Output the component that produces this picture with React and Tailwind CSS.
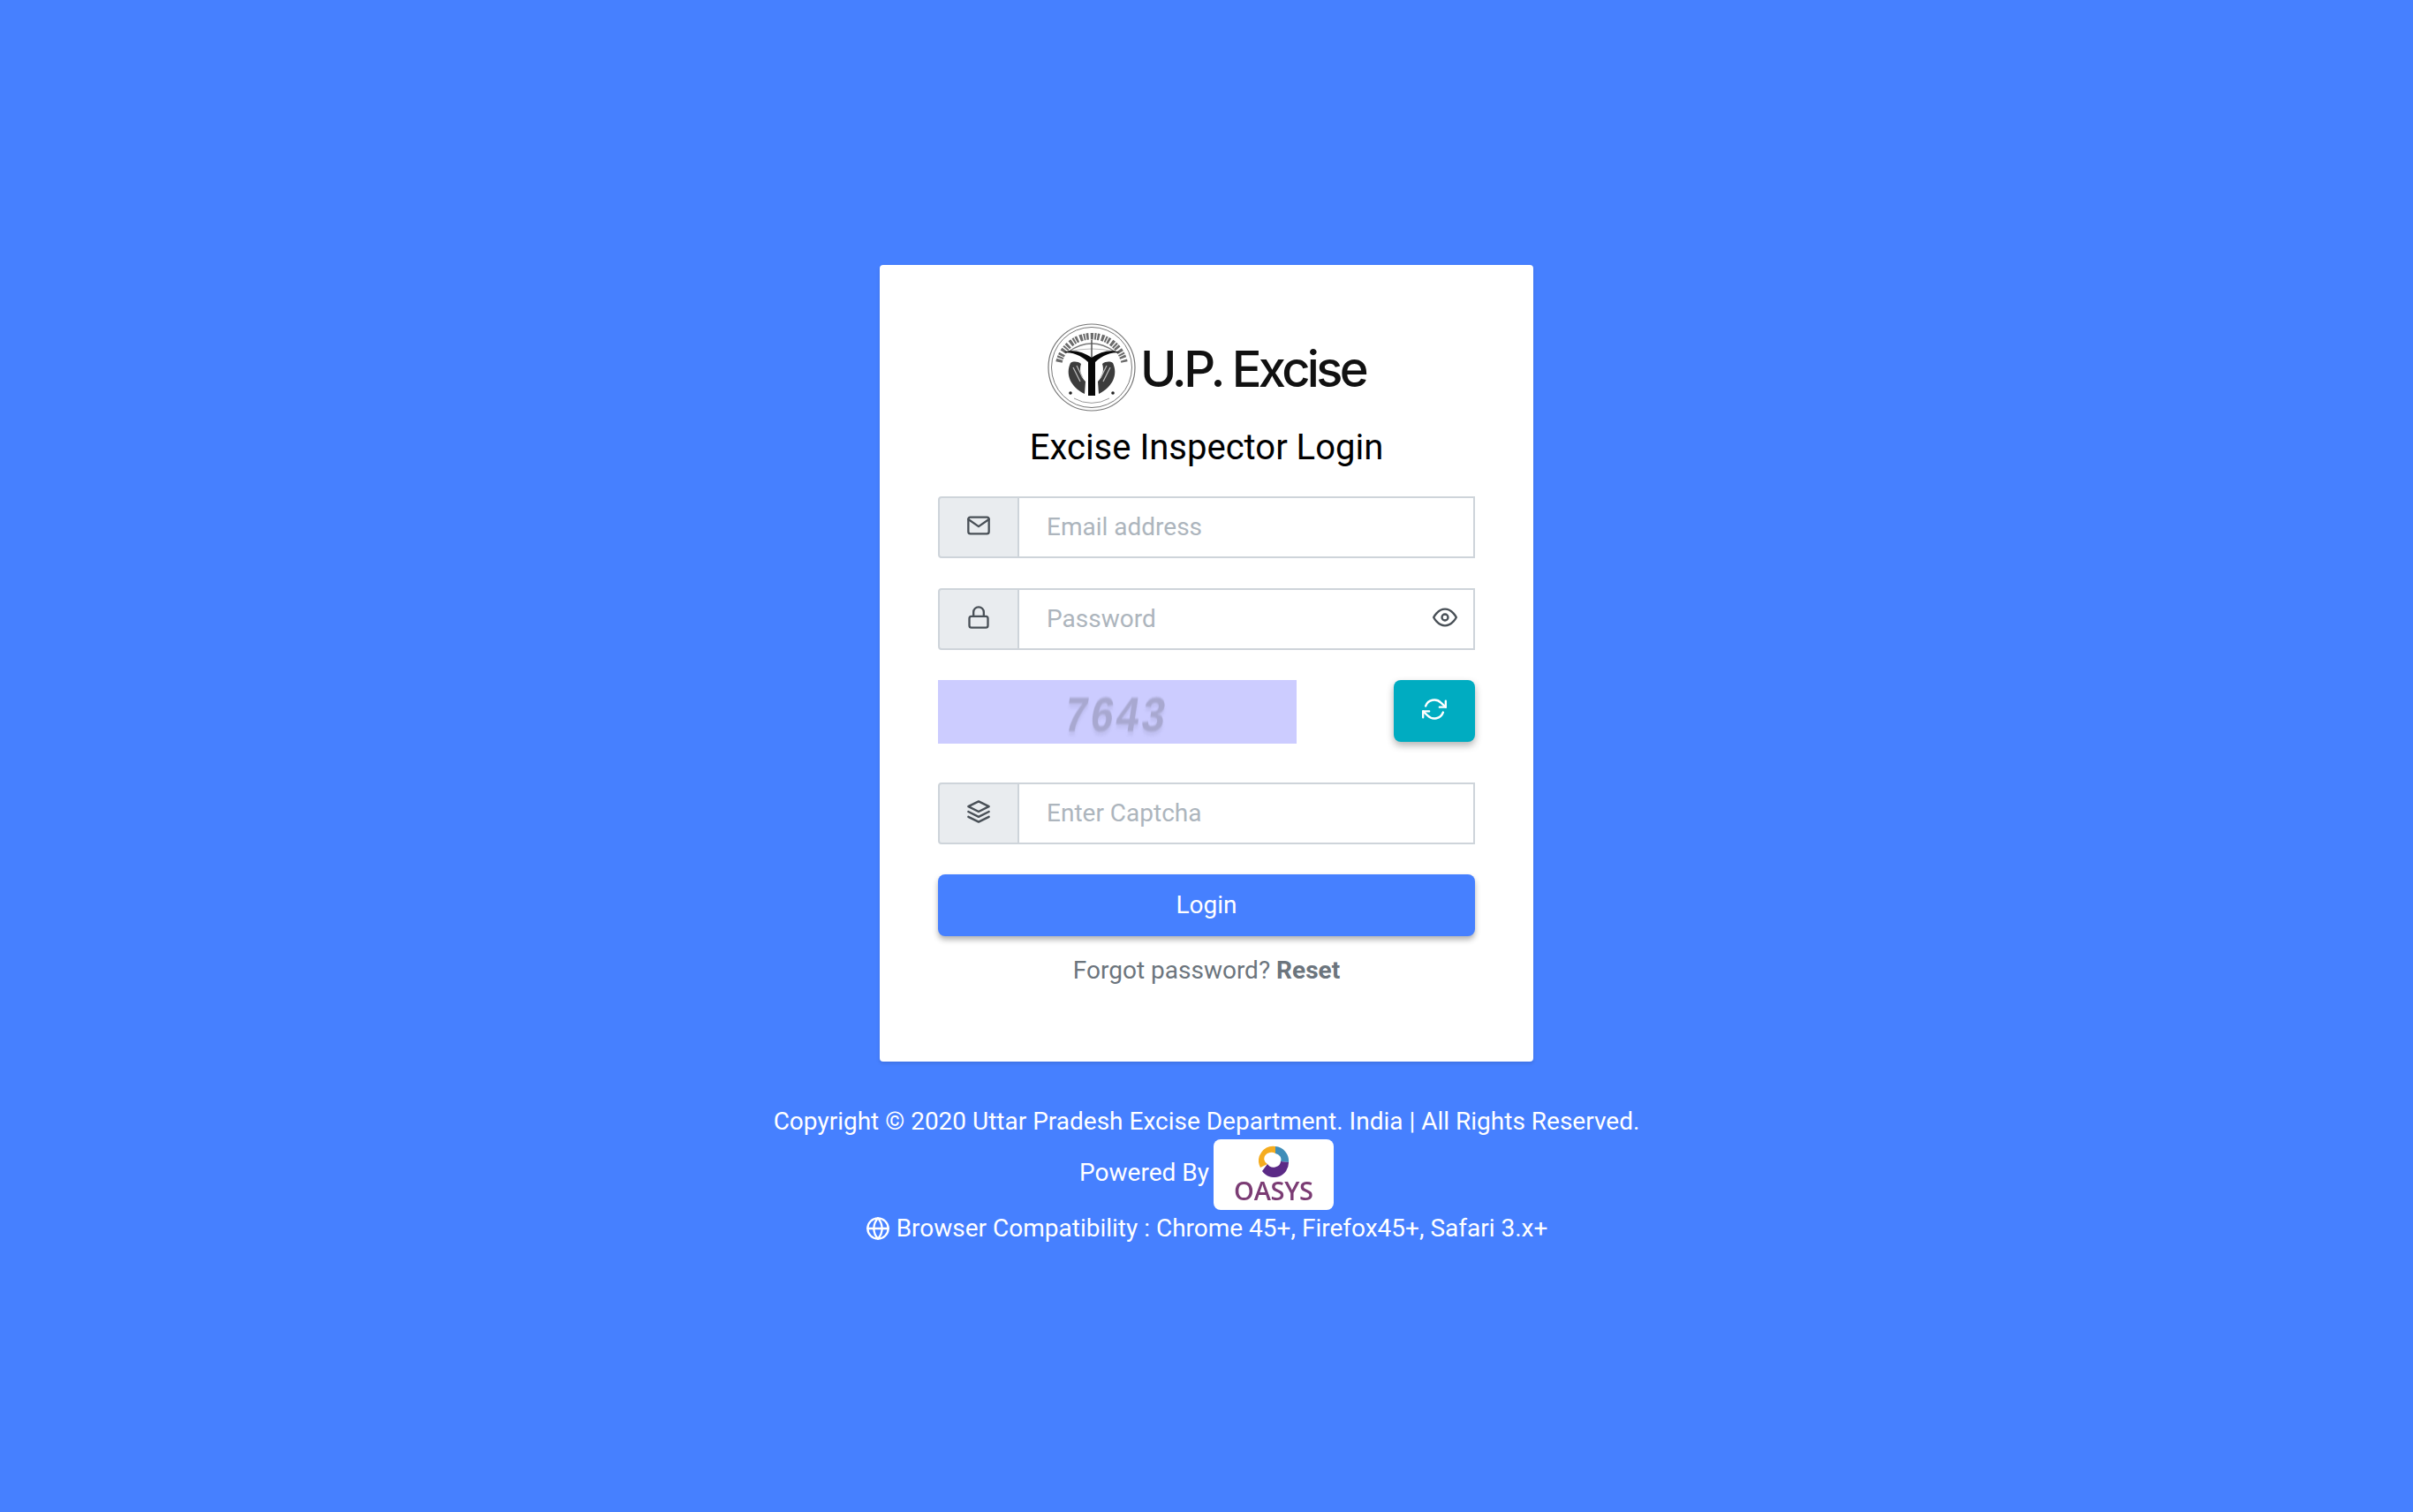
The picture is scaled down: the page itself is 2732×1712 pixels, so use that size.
const Ic = ({ className, children }) => (
  <svg viewBox="0 0 24 24" fill="none" stroke="currentColor" strokeWidth="2" strokeLinecap="round" strokeLinejoin="round" className={className}>{children}</svg>
);
const Mail = () => <Ic className="w-7 h-7 -mt-1"><path d="M4 4h16c1.100 0 2 .9 2 2v12c0 1.100-.9 2-2 2H4c-1.100 0-2-.9-2-2V6c0-1.100.9-2 2-2z"/><polyline points="22,6 12,13 2,6"/></Ic>;
const Lock = () => <Ic className="w-7 h-7 -mt-1"><rect x="3" y="11" width="18" height="11" rx="2" ry="2"/><path d="M7 11V7a5 5 0 0 1 10 0v4"/></Ic>;
const Layers = () => <Ic className="w-7 h-7 -mt-1"><polygon points="12 2 2 7 12 12 22 7 12 2"/><polyline points="2 17 12 22 22 17"/><polyline points="2 12 12 17 22 12"/></Ic>;

const Field = ({ icon, placeholder, type = "text", trailing, className = "" }) => (
  <div className={`relative flex h-[70px] w-full ${className}`}>
    <div className="flex w-[92px] shrink-0 items-center justify-center rounded-l-[4px] border-2 border-[#ced4da] bg-[#e9ecef] text-[#495057]">{icon}</div>
    <input
      type={type}
      placeholder={placeholder}
      className="min-w-0 flex-1 border-2 border-l-0 border-[#ced4da] bg-white pl-[31px] pr-4 text-[28px] text-[#495057] outline-none placeholder:text-[#adb5bd]"
    />
    {trailing}
  </div>
);

const Seal = () => (
  <svg viewBox="0 0 100 100" className="h-[100px] w-[100px] shrink-0 blur-[0.6px]">
    <ellipse cx="50" cy="50" rx="49" ry="49" fill="none" stroke="#777" strokeWidth="1.200" />
    <circle cx="50" cy="50" r="45.500" fill="none" stroke="#777" strokeWidth="1" />
    <path d="M13 44 A38 38 0 0 1 87 44" fill="none" stroke="#3a3a3a" strokeWidth="7.500" strokeDasharray="3.200 1.300 2 1.100 2.600 2.200" opacity="0.75" />
    <path d="M24 32 Q50 14 76 32" fill="none" stroke="#777" strokeWidth="1.300" />
    <path d="M24 32 Q50 26 76 32" fill="none" stroke="#aaa" strokeWidth="0.800" />
    <path d="M50 19 V44" stroke="#555" strokeWidth="1.500" />
    <path d="M26 45 C20 58 26 72 42 80 L43 66 C37 60 36 52 38 46 C34 43 29 43 26 45 Z" fill="#3c3c3c" />
    <path d="M74 45 C80 58 74 72 58 80 L57 66 C63 60 64 52 62 46 C66 43 71 43 74 45 Z" fill="#3c3c3c" />
    <path d="M29 50 L37 66 M33 48 L40 62 M71 50 L63 66 M67 48 L60 62" stroke="#bbb" strokeWidth="1.300" />
    <path d="M18 33 C28 33 38 36 46 44 L46 82 L54 82 L54 44 C62 36 72 33 82 33 C72 29 60 32 50 39 C40 32 28 29 18 33 Z" fill="#080808" />
    <circle cx="26" cy="79" r="1.800" fill="#222" />
    <circle cx="74" cy="79" r="1.800" fill="#222" />
    <path d="M30 85 A40 40 0 0 0 70 85" fill="none" stroke="#999" strokeWidth="1" />
  </svg>
);

const OasysRing = () => (
  <svg viewBox="0 0 36 36" className="h-[36px] w-[36px] blur-[0.4px]">
    <path d="M20 1 A16.500 16.500 0 0 0 3 25 L11 21 A8 7 0 0 1 20 9 Z" fill="#f5ac1f" />
    <path d="M20 1 A16.500 16.500 0 0 1 35 19 L26 18 A8 7 0 0 0 20 9 Z" fill="#3f8db8" />
    <path d="M35 19 A16.500 16.500 0 0 1 5 29 L11 21 A8 7 0 0 0 26 18 Z" fill="#5b2a86" />
  </svg>
);

export default function App() {
  return (
    <div className="flex min-h-[1712px] w-full flex-col items-center justify-center bg-[#4680ff] pb-[1px] font-['Roboto',sans-serif]">
      <div className="flex h-[902px] w-[740px] flex-col rounded-[4px] bg-white px-[66px] pt-[66px] shadow-[0_2px_4px_rgba(0,0,0,0.12)]">
        <div className="flex h-[100px] items-center justify-center">
          <Seal />
          <span className="mt-[4px] ml-[5px] font-['Inter',sans-serif] text-[56px] leading-none font-medium tracking-[-0.065em] text-[#111] blur-[0.3px]">U.P. Excise</span>
        </div>
        <h1 className="mt-[16px] mb-[30px] text-center text-[40px] leading-[50px] font-normal text-black">Excise Inspector Login</h1>
        <Field icon={<Mail />} placeholder="Email address" type="email" className="mb-[34px]" />
        <Field
          icon={<Lock />}
          placeholder="Password"
          type="password"
          className="mb-[34px]"
          trailing={
            <span className="absolute right-[20px] top-[19px] text-[#495057]">
              <Ic className="h-7 w-7"><path d="M1 12s4-8 11-8 11 8 11 8-4 8-11 8-11-8-11-8z" /><circle cx="12" cy="12" r="3" /></Ic>
            </span>
          }
        />
        <div className="mb-[44px] flex items-start justify-between">
          <div className="flex h-[72px] w-[406px] items-center justify-center bg-[#ccccff]">
            <span className="mt-[13px] mr-[4px] origin-center scale-y-[1.25] font-['Liberation_Mono',monospace] text-[46px] leading-none font-bold tracking-[1.500px] text-[#a8a8d0] italic blur-[0.7px] [text-shadow:0_4px_2px_rgba(165,165,207,0.25)]">7643</span>
          </div>
          <button className="flex h-[70px] w-[92px] items-center justify-center rounded-[8px] bg-[#00acc1] text-white shadow-[0_4px_8px_rgba(0,0,0,0.3)]">
            <Ic className="-mt-1 h-7 w-7">
              <polyline points="23 4 23 10 17 10" />
              <polyline points="1 20 1 14 7 14" />
              <path d="M3.510 9a9 9 0 0 1 14.850-3.360L23 10M1 14l4.640 4.360A9 9 0 0 0 20.490 15" />
            </Ic>
          </button>
        </div>
        <Field icon={<Layers />} placeholder="Enter Captcha" className="mb-[34px]" />
        <button className="h-[70px] w-full rounded-[8px] bg-[#4680ff] text-[28px] font-normal text-white shadow-[0_4px_6px_rgba(0,0,0,0.3)]">Login</button>
        <p className="mt-[21px] text-center text-[28px] leading-[36px] text-[#6c757d]">
          Forgot password? <a className="font-bold">Reset</a>
        </p>
      </div>
      <div className="mt-[48px] flex flex-col items-center text-[28px] leading-[40px] text-white">
        <p>Copyright © 2020 Uttar Pradesh Excise Department. India | All Rights Reserved.</p>
        <div className="flex h-[80px] items-center">
          <span className="mr-[5px] -mt-[4px]">Powered By</span>
          <div className="flex h-[80px] w-[136px] flex-col items-center rounded-[8px] bg-white pt-[7px]">
            <OasysRing />
            <span className="font-['Open_Sans',sans-serif] text-[29px] leading-[30px] font-semibold tracking-[-0.01em] text-[#7b3c74] blur-[0.3px]">OASYS</span>
          </div>
        </div>
        <p className="mt-[1px] flex items-center">
          <Ic className="mr-[7px] h-7 w-7"><circle cx="12" cy="12" r="10" /><line x1="2" y1="12" x2="22" y2="12" /><path d="M12 2a15.300 15.300 0 0 1 4 10 15.300 15.300 0 0 1-4 10 15.300 15.300 0 0 1-4-10 15.300 15.300 0 0 1 4-10z" /></Ic>
          Browser Compatibility : Chrome 45+, Firefox45+, Safari 3.x+
        </p>
      </div>
    </div>
  );
}
